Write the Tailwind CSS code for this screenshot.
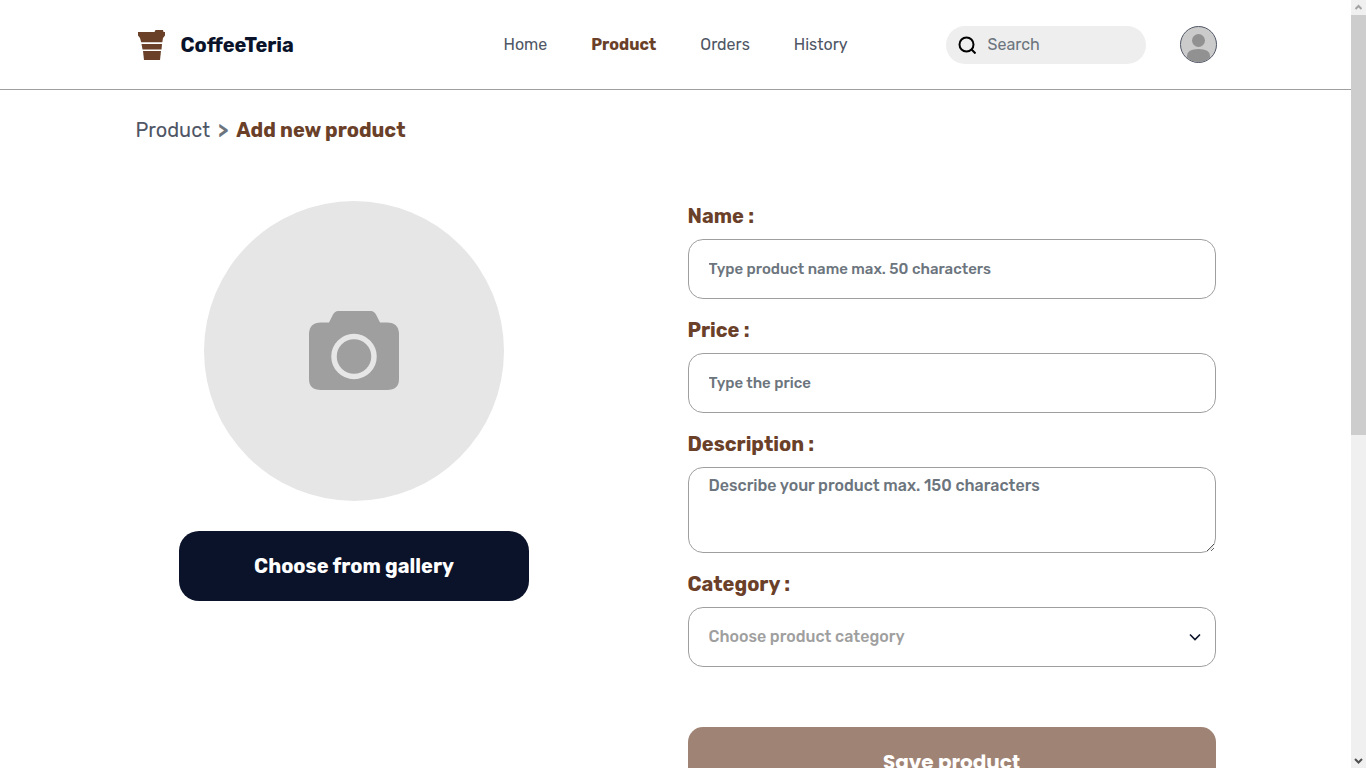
<!DOCTYPE html>
<html lang="en">
<head>
<meta charset="utf-8">
<meta name="viewport" content="width=device-width, initial-scale=1">
<title>CoffeeTeria</title>
<script src="https://cdn.jsdelivr.net/npm/@tailwindcss/browser@4"></script>
</head>
<body class="flex h-screen overflow-hidden bg-white font-[Rubik,Inter,sans-serif] text-[#4f5665]">
<div class="min-w-0 flex-1 overflow-hidden">
  <header class="border-b border-[#9f9f9f]">
    <div class="mx-auto flex h-[89px] max-w-[1082px] items-center">
      <a href="#" class="flex w-[369px] items-center gap-[15px] text-xl font-bold text-[#0b132a]">
        <svg class="h-[31px] w-[31px]" viewBox="0 0 31 31" fill="#6a4029" aria-hidden="true">
          <path d="M3 3H19.500L20.500 1H28L28.500 3H30V6.500L28 9L27.300 13.300H6.200L5 9L3 6.500Z"/><path d="M6.500 15H27L26.500 20.500H7.500Z"/><path d="M8 22H26L25 31H9Z"/>
        </svg>
        CoffeeTeria
      </a>
      <nav class="flex gap-11">
        <a href="#">Home</a>
        <a href="#" class="font-bold text-[#6a4029]" aria-current="page">Product</a>
        <a href="#">Orders</a>
        <a href="#">History</a>
      </nav>
      <div class="ml-auto flex items-center gap-[34px]">
        <label class="flex h-[38px] w-[200px] items-center gap-3 rounded-full bg-[#eee] px-3">
          <svg class="h-[18px] w-[18px] shrink-0" viewBox="0 0 18 18" fill="none" stroke="#000" stroke-width="2" aria-hidden="true"><circle cx="8.5" cy="8.5" r="7"/><path d="m13 13 4.500 4.500"/></svg>
          <input type="search" aria-label="Search" placeholder="Search" class="w-full min-w-0 bg-transparent outline-none placeholder:text-[#6c757d]">
        </label>
        <button type="button" aria-label="Profile" class="h-[37px] w-[37px] overflow-hidden rounded-full border border-[#4f5665] bg-[#cbcbcb]">
          <svg class="h-full w-full" viewBox="0 0 35 35" fill="#919191" aria-hidden="true"><circle cx="17.500" cy="13.500" r="6.500"/><path d="M6 35v-6q0-7 11.500-7T29 29v6Z"/></svg>
        </button>
      </div>
    </div>
  </header>
  <main class="mx-auto max-w-[1080px] pt-[26px]">
    <div class="flex gap-2 text-xl">
      <a href="#">Product</a>
      <span class="font-bold text-[#6c757d]">&gt;</span>
      <h1 class="font-bold text-[#6a4029]">Add new product</h1>
    </div>
    <form class="mt-[57px] grid grid-cols-[437fr_528fr] gap-[115px]">
      <div class="flex flex-col items-center gap-[30px]">
        <div class="flex h-[300px] w-[300px] items-center justify-center rounded-full bg-[#e6e6e6]">
          <svg class="h-20 w-[90px]" viewBox="0 0 90 80" aria-hidden="true"><path fill="#9f9f9f" d="M12 11.500h8l4-8Q26 0 29 0h33q3 0 5 3.500l4 8h7q12 0 12 12V68q0 11-12 11H12Q0 79 0 68V23.500q0-12 12-12Z"/><circle cx="45" cy="45.500" r="20" fill="none" stroke="#e6e6e6" stroke-width="5.500"/></svg>
        </div>
        <button type="button" class="h-[70px] w-[350px] rounded-[20px] bg-[#0b132a] text-xl font-bold text-white">Choose from gallery</button>
      </div>
      <div class="flex flex-col">
        <label for="name" class="mb-2 text-xl leading-[30px] font-bold text-[#6a4029]">Name :</label>
        <input id="name" type="text" placeholder="Type product name max. 50 characters" class="mb-4 h-[60px] rounded-[15px] border border-[#9f9f9f] px-5 text-[15px] font-medium outline-none placeholder:text-[#6c757d]">
        <label for="price" class="mb-2 text-xl leading-[30px] font-bold text-[#6a4029]">Price :</label>
        <input id="price" type="text" placeholder="Type the price" class="mb-4 h-[60px] rounded-[15px] border border-[#9f9f9f] px-5 text-[15px] font-medium outline-none placeholder:text-[#6c757d]">
        <label for="description" class="mb-2 text-xl leading-[30px] font-bold text-[#6a4029]">Description :</label>
        <textarea id="description" placeholder="Describe your product max. 150 characters" class="mb-4 h-[86px] rounded-[15px] border border-[#9f9f9f] px-5 py-[6px] font-medium outline-none placeholder:text-[#6c757d]"></textarea>
        <label for="category" class="mb-2 text-xl leading-[30px] font-bold text-[#6a4029]">Category :</label>
        <div class="relative">
          <select id="category" class="h-[60px] w-full appearance-none rounded-[15px] border border-[#9f9f9f] bg-transparent px-5 font-medium text-[#9f9f9f] outline-none"><option>Choose product category</option></select>
          <svg class="pointer-events-none absolute top-[26px] right-[15px] h-2 w-3" viewBox="0 0 12 8" fill="none" stroke="#0b132a" stroke-width="1.600" aria-hidden="true"><path d="m1 1.500 5 5 5-5"/></svg>
        </div>
        <button type="submit" class="mt-[60px] h-[70px] rounded-[15px] bg-[#9f8374] font-[Poppins,Rubik,sans-serif] text-xl font-bold text-white">Save product</button>
      </div>
    </form>
  </main>
</div>
<div class="flex w-[15px] shrink-0 flex-col bg-[#f0f0f0]" aria-hidden="true">
  <svg class="h-[15px] w-[15px]" viewBox="0 0 15 15" fill="none" stroke="#a3a3a3" stroke-width="2"><path d="m4.500 9 3-3 3 3"/></svg>
  <div class="h-[420px] bg-[#cdcdcd]"></div>
  <svg class="mt-auto h-[15px] w-[15px]" viewBox="0 0 15 15" fill="none" stroke="#505050" stroke-width="2"><path d="m4 6 3.500 3.500 3.500-3.500"/></svg>
</div>
</body>
</html>
